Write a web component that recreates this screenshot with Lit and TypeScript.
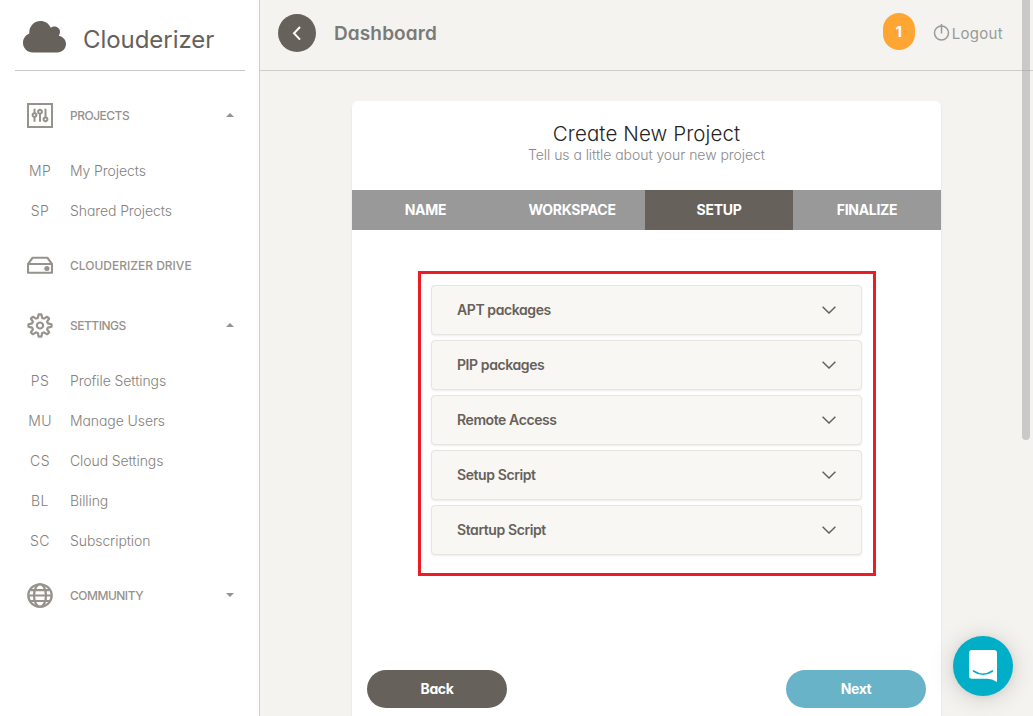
import { LitElement, html, css, svg } from "lit";
import { customElement, property } from "lit/decorators.js";
import { classMap } from "lit/directives/class-map.js";

const type = css`
  :host {
    font-family: Inter, "Noto Sans", sans-serif;
    font-feature-settings: "cv11" 1, "cv05" 0;
  }
  * { box-sizing: border-box; }
  svg { display: block; flex: none; }
`;

const gearPath = (() => {
  const pts: string[] = [];
  const teeth = 8;
  for (let i = 0; i < teeth; i++) {
    const base = (i * 2 * Math.PI) / teeth - Math.PI / 2;
    for (const [r, a] of [[8.2, -0.27], [11.6, -0.12], [11.6, 0.12], [8.2, 0.27]]) {
      pts.push(`${(13 + r * Math.cos(base + a)).toFixed(2)} ${(13 + r * Math.sin(base + a)).toFixed(2)}`);
    }
  }
  return `M${pts.join("L")}Z`;
})();

const icons: Record<string, unknown> = {
  sliders: svg`<g fill="none" stroke="currentColor" stroke-width="2">
      <path d="M1 1H25V25H1Z"/>
      <g stroke-width="2"><path d="M7.5 6V10.6M7.5 14.6V19.500M13 6V7.200M13 11V19.500M18.500 6V15M18.500 19V20"/>
      <circle cx="7.500" cy="12.600" r="1.900"/><circle cx="13" cy="9.200" r="1.900"/><circle cx="18.500" cy="17" r="1.900"/></g>
    </g>`,
  drive: svg`<g fill="none" stroke="currentColor" stroke-width="2.100" stroke-linejoin="round">
      <path d="M1 11.500L5.500 5H20.500L25 11.500"/><path d="M1 11.500H25V20.500H1Z"/></g>
      <circle cx="19.900" cy="16" r="2.600" fill="currentColor"/>`,
  gear: svg`<g fill="none" stroke="currentColor" stroke-width="2.200" stroke-linejoin="round"><path d=${gearPath}/><circle cx="13" cy="13" r="3.100"/></g>`,
  globe: svg`<g fill="none" stroke="currentColor" stroke-width="2.300"><circle cx="13" cy="13" r="11.700"/>
      <ellipse cx="13" cy="13" rx="6" ry="11.700"/><path d="M1 13H25M3.500 7.300H22.500M3.500 18.700H22.500"/></g>`,
};

interface Entry { label: string; icon: string; open?: boolean; children?: [string, string][]; }

const entries: Entry[] = [
  { label: "Projects", icon: "sliders", open: true, children: [["MP", "My Projects"], ["SP", "Shared Projects"]] },
  { label: "Clouderizer Drive", icon: "drive" },
  {
    label: "Settings", icon: "gear", open: true,
    children: [["PS", "Profile Settings"], ["MU", "Manage Users"], ["CS", "Cloud Settings"], ["BL", "Billing"], ["SC", "Subscription"]],
  },
  { label: "Community", icon: "globe", open: false },
];

@customElement("side-bar")
export class SideBar extends LitElement {
  static styles = [type, css`
    :host { display: block; width: 260px; flex: none; height: 716px; background: #fff; border-right: 1px solid #cfcdca; color: #96928c; }
    .logo { display: flex; align-items: center; margin: 0 14px 0 15px; height: 71px; padding: 3px 0 0 8px; border-bottom: 1px solid #cbc9c6; color: #66615b; }
    .brand { font-size: 24px; line-height: 32px; margin: 7px 0 0 17px; letter-spacing: -0.05px; font-weight: 400; }
    .nav { padding-top: 9px; }
    .group { margin: 10px 0; }
    .head { display: flex; align-items: center; height: 50px; padding: 0 25px 0 27px; font-size: 12px; font-weight: 500; text-transform: uppercase; letter-spacing: -0.5px; }
    .head svg { margin-top: 1px; }
    .head span { margin: 1px 0 0 17px; flex: 1; }
    .head .wide { letter-spacing: 0; }
    .caret { border: 4px solid transparent; border-top: 0; border-bottom-color: currentColor; }
    .caret.down { border-top: 4px solid currentColor; border-bottom: 0; }
    .sub { padding-top: 10px; }
    .item { display: flex; align-items: center; height: 40px; font-size: 14px; font-weight: 300; color: #85817b; }
    .mini { width: 26px; margin: 0 17px 0 27px; text-align: center; letter-spacing: 0.4px; white-space: nowrap; }
    .name { letter-spacing: -0.09px; }
  `];
  render() {
    return html`
      <div class="logo">
        <svg width="43" height="32" viewBox="0 0 43 32" fill="currentColor">
          <path d="M10 31.500C4.500 31.500 0 27.300 0 22C0 17.500 2.500 14 6.300 12.500C5.800 5.500 11 0 17.300 0C22 0 26 2.700 27.700 6.800C31.500 3.700 37.500 6.300 37 11.500C36.900 12.700 36.500 13.500 35.800 14.700C40 15.600 43 19 43 22.800C43 27.700 39.200 31.500 34 31.500Z"/>
        </svg>
        <div class="brand">Clouderizer</div>
      </div>
      <nav class="nav">
        ${entries.map((e) => html`
          <div class="group">
            <div class="head">
              <svg width="26" height="25" viewBox="0 0 26 26" preserveAspectRatio="none">${icons[e.icon]}</svg>
              <span class=${classMap({ wide: e.open === undefined })}>${e.label}</span>
              ${e.open === undefined ? "" : html`<i class=${classMap({ caret: true, down: !e.open })}></i>`}
            </div>
            ${e.children ? html`<div class="sub">${e.children.map(([m, n]) => html`
              <div class="item"><span class="mini">${m}</span><span class="name">${n}</span></div>`)}</div>` : ""}
          </div>`)}
      </nav>`;
  }
}

@customElement("top-bar")
export class TopBar extends LitElement {
  static styles = [type, css`
    :host { display: flex; align-items: center; height: 71px; padding: 0 30px 4px 18px; border-bottom: 1px solid #cfcdca; color: #9a9a9a; box-sizing: border-box; }
    .back { width: 38px; height: 38px; border-radius: 50%; background: #66615b; display: grid; place-items: center; }
    .title { margin-left: 18px; font-size: 19px; font-weight: 600; color: #7a7a78; letter-spacing: 0.12px; flex: 1; }
    .badge { width: 32px; height: 37px; border-radius: 16px; background: #ffa534; color: #fff; font-size: 15px; font-weight: 700; display: grid; place-items: center; margin: -4px 18px 0 0; }
    .logout { display: flex; align-items: center; gap: 2px; font-size: 15px; }
    .out { letter-spacing: 0.3px; }
    .logout svg { margin-top: -2px; }
  `];
  render() {
    return html`
      <div class="back"><svg width="12" height="16" viewBox="0 0 12 16"><path d="M9 2L3 8.300L9 14.600" fill="none" stroke="#fff" stroke-width="2"/></svg></div>
      <div class="title">Dashboard</div>
      <div class="badge">1</div>
      <div class="logout">
        <svg width="17" height="18" viewBox="0 0 17 18" fill="none" stroke="currentColor"><circle cx="8.500" cy="10" r="7" stroke-width="1.500"/><path d="M8.500 1V10.500" stroke-width="1.500"/></svg>
        <span class="out">Logout</span>
      </div>`;
  }
}

@customElement("setup-panel")
export class SetupPanel extends LitElement {
  @property() label = "";
  static styles = [type, css`
    :host { display: flex; align-items: center; justify-content: space-between; height: 50px; padding: 0 25px; background: #f8f7f3; border: 1px solid #e6e5e0; border-radius: 4px; box-shadow: 0 1px 2px rgba(0, 0, 0, 0.08); color: #66615b; box-sizing: border-box; font-size: 14px; font-weight: 600; letter-spacing: -0.41px; }
    span { margin-top: -1px; }
  `];
  render() {
    return html`<span>${this.label}</span>
      <svg width="14" height="8" viewBox="0 0 14 8" fill="none" stroke="currentColor" stroke-width="1.500"><path d="M0.600 0.700L7 7L13.400 0.700"/></svg>`;
  }
}

@customElement("project-card")
export class ProjectCard extends LitElement {
  static styles = [type, css`
    :host { display: block; width: 589px; height: 640px; background: #fff; border-radius: 6px; box-shadow: 0 2px 2px rgba(204, 197, 185, 0.5); }
    .intro { height: 89px; padding-top: 20px; text-align: center; }
    .heading { font-size: 20.5px; line-height: 26px; font-weight: 275; color: #252422; letter-spacing: 0.1px; }
    .lead { font-size: 14px; line-height: 16px; font-weight: 300; color: #8a8a8a; letter-spacing: -0.05px; }
    .tabs { display: grid; grid-template-columns: 147px 146px 148px 148px; height: 40px; background: #999; color: #fff; font-size: 14px; font-weight: 700; letter-spacing: -0.3px; }
    .tab { display: grid; place-items: center; padding-bottom: 1px; }
    .tab.active { background: #66615b; }
    .frame { margin: 41px 65px 0 66px; height: 305px; border: 3px solid #ed1c24; padding: 11px 11px 0 10px; display: flex; flex-direction: column; gap: 5px; }
    .actions { display: flex; justify-content: space-between; padding: 94px 15px 0; }
    .btn { width: 140px; height: 38px; border-radius: 19px; display: grid; place-items: center; background: #66615b; color: #fff; font-size: 14px; font-weight: 700; letter-spacing: -0.4px; padding-bottom: 1px; }
    .btn.next { background: #68b3c8; }
  `];
  render() {
    const panels = ["APT packages", "PIP packages", "Remote Access", "Setup Script", "Startup Script"];
    return html`
      <div class="intro"><div class="heading">Create New Project</div><div class="lead">Tell us a little about your new project</div></div>
      <div class="tabs">${["NAME", "WORKSPACE", "SETUP", "FINALIZE"].map((t) => html`<div class=${classMap({ tab: true, active: t === "SETUP" })}><span>${t}</span></div>`)}</div>
      <div class="frame">${panels.map((p) => html`<setup-panel .label=${p}></setup-panel>`)}</div>
      <div class="actions"><div class="btn">Back</div><div class="btn next">Next</div></div>`;
  }
}

@customElement("app-root")
export class AppRoot extends LitElement {
  static styles = [type, css`
    :host { display: flex; position: relative; width: 1033px; height: 716px; overflow: hidden; background: #f4f3ef; }
    .main { flex: 1; min-width: 0; }
    .card { margin: 30px 0 0 92px; }
    .thumb { position: absolute; left: 1022px; top: -8px; width: 8px; height: 448px; border-radius: 4px; background: rgba(150, 150, 150, 0.45); }
    .chat { position: absolute; left: 953px; top: 636px; width: 60px; height: 60px; border-radius: 50%; background: #00aec7; display: grid; place-items: center; box-shadow: 0 1px 6px rgba(0, 0, 0, 0.06), 0 2px 24px rgba(0, 0, 0, 0.16); }
  `];
  render() {
    return html`
      <side-bar></side-bar>
      <div class="main"><top-bar></top-bar><project-card class="card"></project-card></div>
      <div class="thumb"></div>
      <div class="chat"><svg width="28" height="32" viewBox="0 0 28 32"><path d="M3 0H25Q28 0 28 3V32Q23 28.800 18.500 28.800H3Q0 28.800 0 25.800V3Q0 0 3 0Z" fill="#fff"/><path d="M4.500 21Q14 27.500 23.500 21" fill="none" stroke="#00aec7" stroke-width="1.600" stroke-linecap="round"/></svg></div>`;
  }
}
